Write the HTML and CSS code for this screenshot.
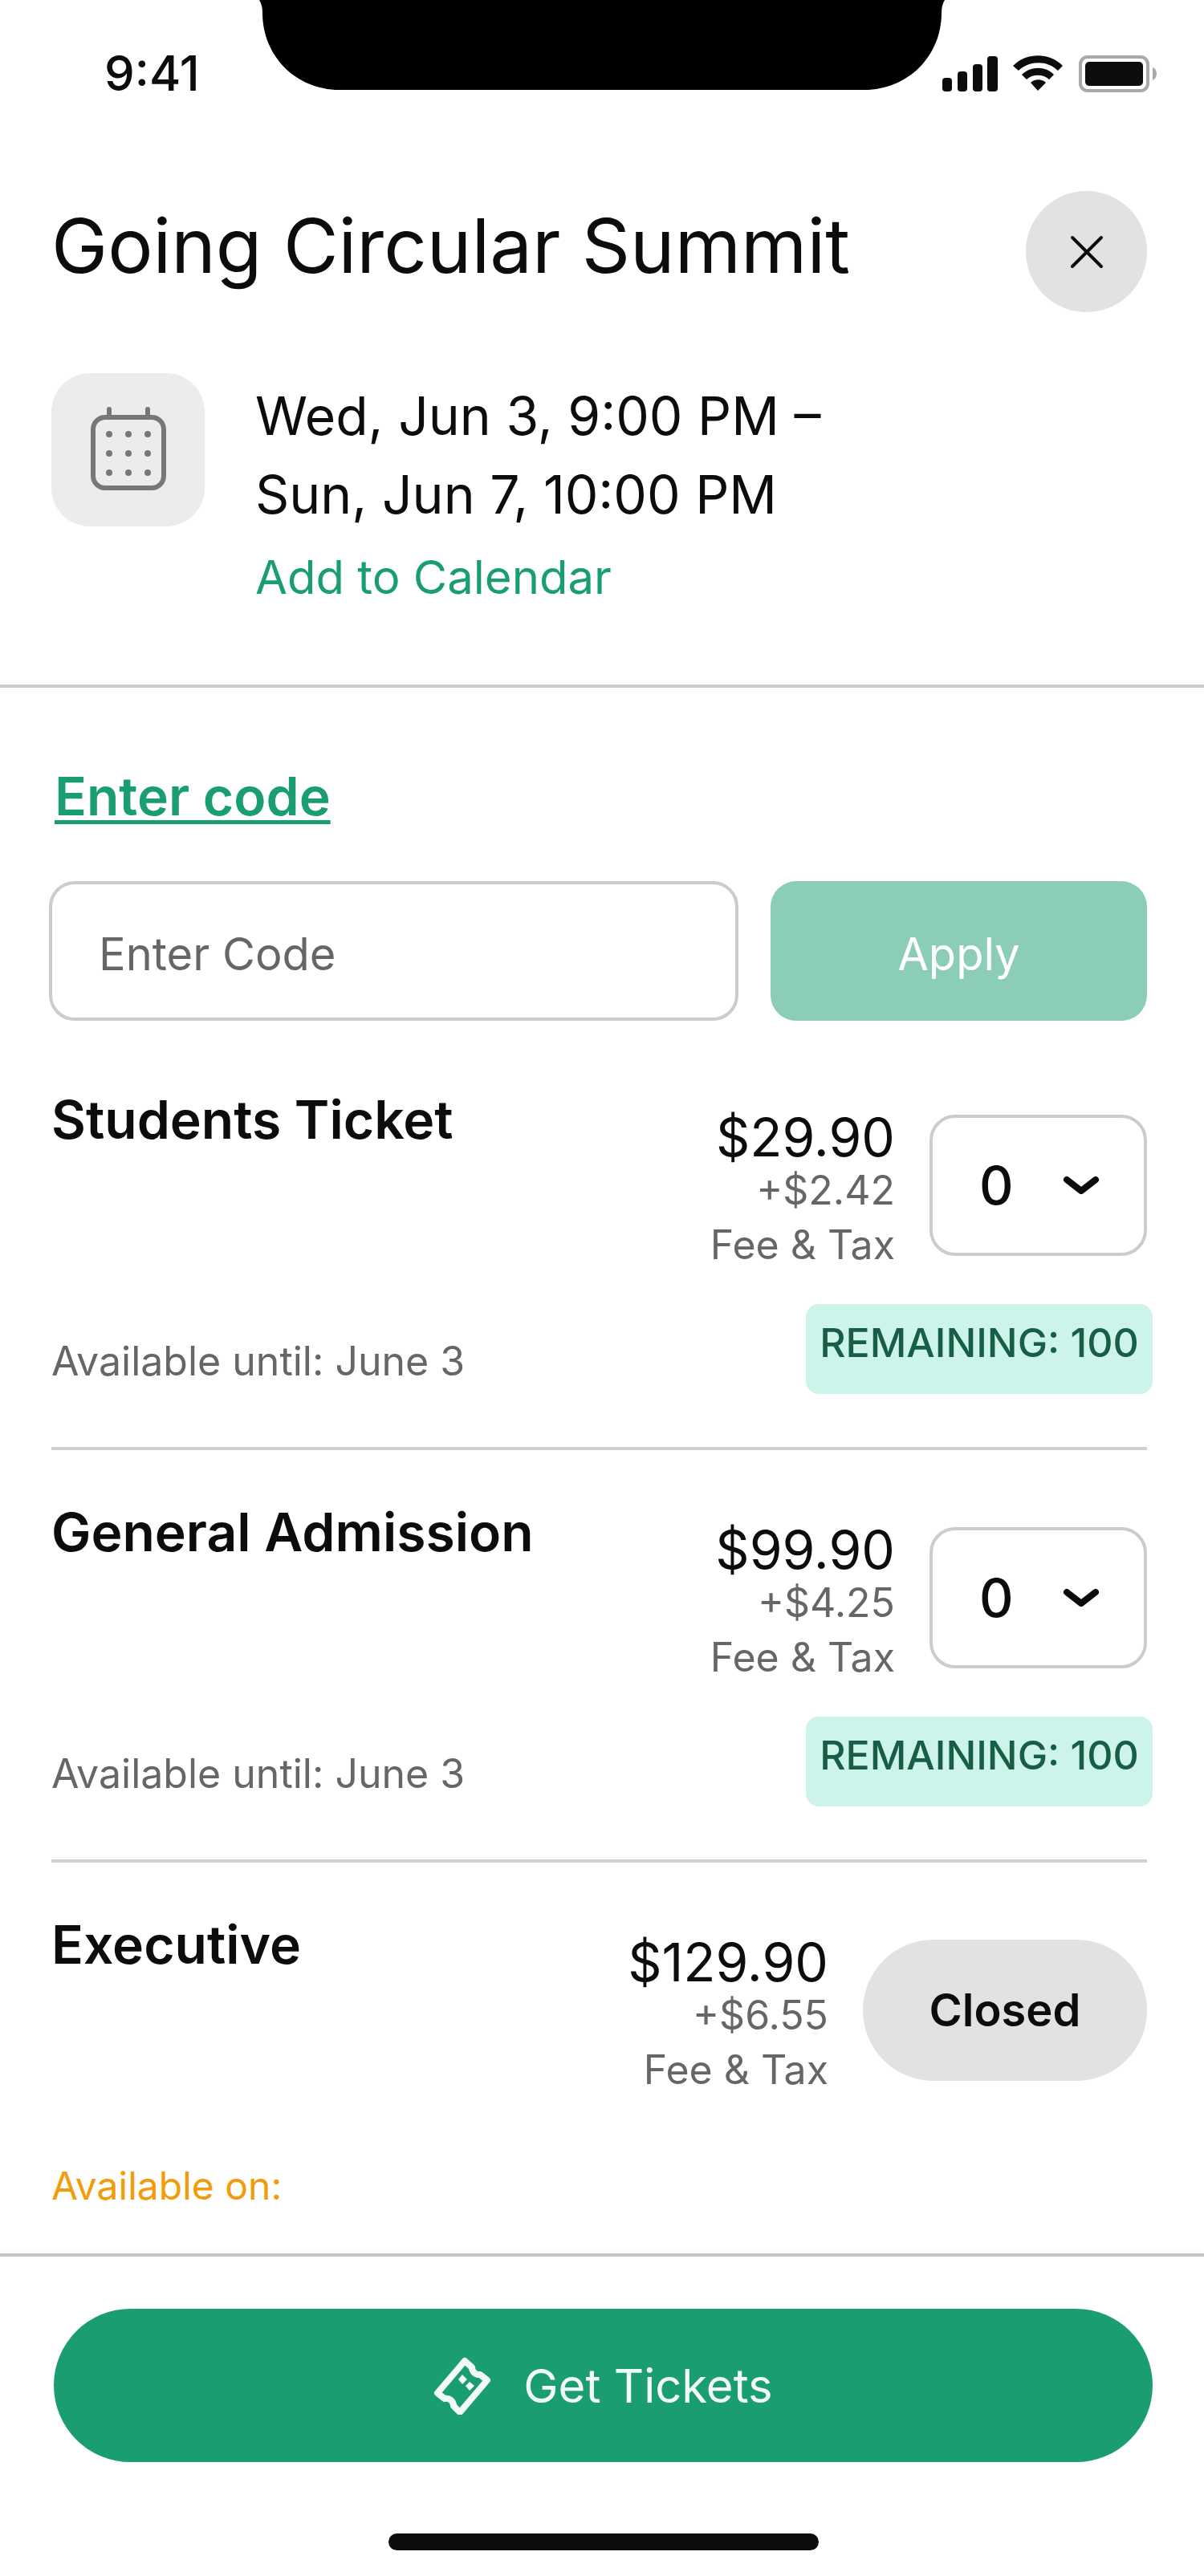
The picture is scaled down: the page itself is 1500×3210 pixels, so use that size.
FILE: index.html
```html
<!DOCTYPE html>
<html lang="en">
<head>
<meta charset="utf-8">
<meta name="viewport" content="width=device-width, initial-scale=1">
<title>Going Circular Summit</title>
<link rel="stylesheet" href="styles.css">
</head>
<body>
<div class="screen">
  <div class="status-bar">
    <span class="status-time">9:41</span>
    <svg class="notch" viewBox="0 0 854 112" aria-hidden="true"><path d="M0 0C3 5 4 10 4 16C4 70 46 112 100 112H754C808 112 850 70 850 16C850 10 851 5 854 0Z"/></svg>
    <svg class="status-icons" viewBox="0 0 268 48" aria-hidden="true">
      <rect x="0" y="28" width="12" height="17" rx="4"/>
      <rect x="19" y="20" width="12" height="25" rx="4"/>
      <rect x="38" y="11" width="12" height="34" rx="4"/>
      <rect x="56" y="1" width="13" height="44" rx="4"/>
      <path d="M88 13C104-4 134-4 150 13L144 19C131 6 108 6 95 19ZM99 24C110 13 129 13 139 24L133 30C126 23 112 23 105 30ZM110 34C115 29 124 29 129 34L119 44Z"/>
      <rect class="battery-case" x="172" y="2" width="84" height="42" rx="9"/>
      <rect x="178" y="8" width="72" height="30" rx="5"/>
      <path class="battery-cap" d="M262 15Q267 17 267 23Q267 28 262 31Z"/>
    </svg>
  </div>

  <header class="header">
    <h1 class="title">Going Circular Summit</h1>
    <button class="close" type="button" aria-label="Close">
      <svg viewBox="0 0 44 44"><path d="M4 4L40 40M40 4L4 40"/></svg>
    </button>
  </header>

  <section class="event">
    <div class="event-icon">
      <svg viewBox="0 0 96 108" aria-hidden="true">
        <rect class="line" x="4" y="13" width="88" height="88" rx="15"/>
        <path class="line" d="M24 3V13M72 3V13"/>
        <g><circle cx="24" cy="34" r="4"/><circle cx="48" cy="34" r="4"/><circle cx="72" cy="34" r="4"/><circle cx="24" cy="58" r="4"/><circle cx="48" cy="58" r="4"/><circle cx="72" cy="58" r="4"/><circle cx="24" cy="82" r="4"/><circle cx="48" cy="82" r="4"/><circle cx="72" cy="82" r="4"/></g>
      </svg>
    </div>
    <div class="event-when">
      <p class="event-dates">Wed, Jun 3, 9:00 PM –<br>Sun, Jun 7, 10:00 PM</p>
      <a class="event-add" href="#">Add to Calendar</a>
    </div>
  </section>

  <form class="code">
    <a class="code-link" href="#code">Enter code</a>
    <div class="code-row">
      <input class="code-input" id="code" type="text" placeholder="Enter Code" aria-label="Enter Code">
      <button class="code-apply" type="button">Apply</button>
    </div>
  </form>

  <main class="tickets">
    <article class="ticket">
      <div class="ticket-top">
        <h2 class="ticket-name">Students Ticket</h2>
        <div class="ticket-price"><p class="price">$29.90</p><p class="fee">+$2.42<br>Fee &amp; Tax</p></div>
        <div class="quantity">
          <select aria-label="Students Ticket quantity"><option>0</option><option>1</option><option>2</option></select>
          <svg viewBox="0 0 46 24" aria-hidden="true"><path d="M5 5L23 19L41 5"/></svg>
        </div>
      </div>
      <div class="ticket-bottom">
        <p class="available">Available until: June 3</p>
        <span class="badge">REMAINING: 100</span>
      </div>
    </article>

    <article class="ticket">
      <div class="ticket-top">
        <h2 class="ticket-name">General Admission</h2>
        <div class="ticket-price"><p class="price">$99.90</p><p class="fee">+$4.25<br>Fee &amp; Tax</p></div>
        <div class="quantity">
          <select aria-label="General Admission quantity"><option>0</option><option>1</option><option>2</option></select>
          <svg viewBox="0 0 46 24" aria-hidden="true"><path d="M5 5L23 19L41 5"/></svg>
        </div>
      </div>
      <div class="ticket-bottom">
        <p class="available">Available until: June 3</p>
        <span class="badge">REMAINING: 100</span>
      </div>
    </article>

    <article class="ticket">
      <div class="ticket-top">
        <h2 class="ticket-name">Executive</h2>
        <div class="ticket-price"><p class="price">$129.90</p><p class="fee">+$6.55<br>Fee &amp; Tax</p></div>
        <button class="closed" type="button">Closed</button>
      </div>
      <div class="ticket-bottom">
        <p class="available available-soon">Available on:</p>
      </div>
    </article>
  </main>

  <footer class="footer">
    <button class="get-tickets" type="button">
      <svg viewBox="0 0 72 72" aria-hidden="true">
        <path class="stub" d="M39 5L5 45L14 52A9 9 0 0 1 25 61L33 69L67 29L58 22A9 9 0 0 1 48 13Z"/>
        <path class="dots" d="M36 22L42 28L36 34L31 28ZM45 31L51 36L45 42L40 36Z"/>
      </svg>
      Get Tickets
    </button>
    <div class="home-indicator"></div>
  </footer>
</div>
</body>
</html>
```
FILE: styles.css
```css
* {
  box-sizing: border-box;
}

body {
  margin: 0;
  background: #fff;
  color: #0c0c0c;
  font-family: Inter, "Liberation Sans", sans-serif;
}

h1, h2, p {
  margin: 0;
  font-weight: 400;
}

button, input, select {
  margin: 0;
  border: 0;
  font-family: inherit;
  color: inherit;
}

svg {
  display: block;
}

.screen {
  display: flex;
  flex-direction: column;
  min-height: 100vh;
  background: #fff;
}

/* Status bar */
.status-bar {
  display: grid;
  grid-template-columns: minmax(0, 1fr) 854px minmax(0, 1fr);
  height: 112px;
}

.status-time {
  padding: 55px 0 0 130px;
  font-size: 60px;
  line-height: 72px;
  font-weight: 500;
}

.notch {
  width: 854px;
  height: 112px;
  fill: #000;
}

.status-icons {
  justify-self: end;
  width: 268px;
  height: 48px;
  margin: 69px 58px 0 0;
  fill: #0c0c0c;
}

.battery-case {
  fill: none;
  stroke: #a9a9a9;
  stroke-width: 4;
}

.battery-cap {
  fill: #a9a9a9;
}

/* Header */
.header {
  display: flex;
  align-items: flex-start;
  justify-content: space-between;
  padding: 126px 71px 76px 64px;
}

.title {
  font-size: 94px;
  line-height: 136px;
}

.close {
  display: grid;
  place-items: center;
  width: 151px;
  height: 151px;
  padding: 0;
  border-radius: 50%;
  background: #e2e2e2;
}

.close svg {
  width: 44px;
  height: 44px;
  fill: none;
  stroke: #0c0c0c;
  stroke-width: 4;
  stroke-linecap: round;
}

/* Date and calendar */
.event {
  display: flex;
  gap: 63px;
  padding: 0 64px 80px;
  border-bottom: 4px solid #ccc;
}

.event-icon {
  display: grid;
  place-items: center;
  width: 191px;
  height: 191px;
  border-radius: 48px;
  background: #ececec;
}

.event-icon svg {
  width: 96px;
  height: 108px;
  fill: #777;
}

.event-icon .line {
  fill: none;
  stroke: #777;
  stroke-width: 6;
  stroke-linecap: round;
}

.event-when {
  padding-top: 4px;
}

.event-dates {
  font-size: 66px;
  line-height: 98px;
}

.event-add {
  display: block;
  color: #1b9d74;
  font-size: 58px;
  line-height: 108px;
  text-decoration: none;
}

/* Promo code */
.code {
  padding: 95px 71px 21px 61px;
}

.code-link {
  display: block;
  width: max-content;
  margin-left: 7px;
  color: #1b9d74;
  font-size: 66px;
  line-height: 80px;
  font-weight: 600;
  text-decoration-thickness: 5px;
  text-underline-offset: 6px;
}

.code-row {
  display: flex;
  gap: 40px;
  padding-top: 66px;
}

.code-input,
.code-apply {
  height: 174px;
  border-radius: 32px;
  font-size: 56px;
}

.code-input {
  flex: 1;
  min-width: 0;
  padding: 8px 58px 0;
  border: 4px solid #ccc;
  background: #fff;
}

.code-input::placeholder {
  color: #666;
  opacity: 1;
}

.code-apply {
  width: 469px;
  padding: 8px 0 0;
  background: #8ccdb9;
  color: #fff;
}

/* Tickets */
.tickets {
  flex: 1;
}

.ticket {
  margin: 0 71px 0 64px;
  padding: 62px 0 66px;
  border-bottom: 4px solid #d0d0d0;
}

.ticket:last-child {
  padding-bottom: 43px;
  border-bottom: 0;
}

.ticket-top {
  display: flex;
  align-items: flex-start;
}

.ticket-name {
  flex: 1;
  font-size: 66px;
  line-height: 80px;
  font-weight: 600;
}

.ticket-price {
  padding: 30px 43px 0 0;
  text-align: right;
}

.price {
  font-size: 66px;
  line-height: 64px;
}

.fee {
  color: #666;
  font-size: 50px;
  line-height: 68px;
}

.quantity {
  display: grid;
  align-items: center;
  width: 271px;
  margin-top: 34px;
}

.quantity select,
.quantity svg {
  grid-area: 1 / 1;
}

.quantity select {
  width: 100%;
  height: 176px;
  padding: 0 60px 0 58px;
  border: 4px solid #ccc;
  border-radius: 32px;
  background: #fff;
  font-size: 66px;
  font-weight: 500;
  appearance: none;
}

.quantity svg {
  justify-self: end;
  width: 46px;
  height: 24px;
  margin-right: 59px;
  fill: none;
  stroke: #0c0c0c;
  stroke-width: 8;
  stroke-linecap: round;
  stroke-linejoin: round;
  pointer-events: none;
}

.closed {
  width: 354px;
  height: 176px;
  margin-top: 34px;
  border-radius: 88px;
  background: #e2e2e2;
  font-size: 56px;
  font-weight: 600;
}

.ticket-bottom {
  display: flex;
  align-items: flex-end;
  justify-content: space-between;
  min-height: 112px;
  margin: 40px -7px 0 0;
}

.available {
  color: #666;
  font-size: 50px;
  line-height: 82px;
}

.available-soon {
  color: #f39c0a;
  font-size: 48px;
}

.badge {
  width: 432px;
  height: 112px;
  border-radius: 16px;
  background: #cdf4ea;
  color: #185e46;
  font-size: 50px;
  line-height: 96px;
  font-weight: 500;
  text-align: center;
}

/* Footer */
.footer {
  padding: 65px 64px 32px 67px;
  border-top: 4px solid #c4c4c4;
  box-shadow: 0 -2px 8px rgb(0 0 0 / 4%);
}

.get-tickets {
  display: flex;
  align-items: center;
  justify-content: center;
  gap: 40px;
  width: 100%;
  height: 191px;
  border-radius: 96px;
  background: #1b9d74;
  color: #f2faf7;
  font-size: 58px;
}

.get-tickets svg {
  width: 72px;
  height: 72px;
}

.stub {
  fill: none;
  stroke: #f2faf7;
  stroke-width: 8;
  stroke-linejoin: round;
}

.dots {
  fill: #f2faf7;
}

.home-indicator {
  width: 536px;
  height: 21px;
  margin: 89px auto 0;
  border-radius: 11px;
  background: #0c0c0c;
}
```
